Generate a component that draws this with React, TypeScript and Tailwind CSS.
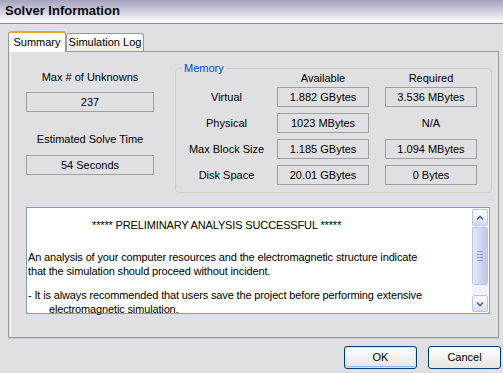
import React from "react";

const Field = ({ w, children }: { w: string; children: React.ReactNode }) => (
  <div className={`${w} h-[20px] border border-[#a0a0a0] flex items-center justify-center text-black`}>{children}</div>
);

export default function App() {
  const rows = [
    ["Virtual", "1.882 GBytes", "3.536 MBytes"],
    ["Physical", "1023 MBytes", "N/A"],
    ["Max Block Size", "1.185 GBytes", "1.094 MBytes"],
    ["Disk Space", "20.01 GBytes", "0 Bytes"],
  ];
  return (
    <div
      className="w-[503px] h-[373px] bg-[#e0dfe3] overflow-hidden flex flex-col text-[11px] text-black"
      style={{ fontFamily: '"Liberation Sans", Arial, sans-serif' }}
    >
      {/* title bar */}
      <div className="h-[22px] bg-gradient-to-b from-[#a4a2bf] via-[#cfcee0] to-[#fbfbfd] flex items-center pl-[5px] font-bold text-[13px] text-[#0a0a0a]">
        Solver Information
      </div>
      <div className="h-[1px] bg-[#f2f2f6]" />
      <div className="h-[1px] bg-[#8a8aa2]" />

      {/* tabs */}
      <div className="mt-[7px] ml-[8px] flex items-end h-[20px]">
        <div className="relative z-10 h-[21px] w-[58px] bg-[#fcfcfe] border-x border-[#919b9c] rounded-t-[3px] border-t-[2px] border-t-[#f2a22a] flex items-center justify-center whitespace-nowrap -mb-[1px]">
          Summary
        </div>
        <div className="h-[18px] w-[78px] bg-gradient-to-b from-[#ffffff] to-[#ecebe6] border border-b-0 border-[#919b9c] rounded-t-[3px] flex items-center justify-center whitespace-nowrap">
          Simulation Log
        </div>
      </div>

      {/* panel */}
      <div className="ml-[8px] w-[491px] h-[287px] border border-[#919b9c] bg-[#e0dfe3] shadow-[inset_1px_0_0_#e0dfe3,inset_2px_0_0_#ffffff] flex flex-col">
        <div className="flex">
          {/* left column */}
          <div className="ml-[17px] pt-[14px] w-[128px] flex flex-col items-center">
            <div className="h-[22px] flex items-center whitespace-nowrap">Max # of Unknowns</div>
            <div className="mt-[4px]" />
            <Field w="w-[128px]">237</Field>
            <div className="h-[22px] mt-[16px] flex items-center whitespace-nowrap">Estimated Solve Time</div>
            <div className="mt-[5px]" />
            <Field w="w-[128px]">54 Seconds</Field>
          </div>

          {/* memory group */}
          <div className="ml-[21px] mt-[16px] w-[317px] h-[125px] border border-[#d0d0bf] rounded-[4px] relative">
            <div className="absolute -top-[8px] left-[6px] px-[2px] bg-[#e0dfe3] text-[#0046d5] leading-[14px]">Memory</div>
            <div className="flex h-[18px] items-center">
              <div className="w-[101px]" />
              <div className="w-[92px] text-center">Available</div>
              <div className="w-[16px]" />
              <div className="w-[92px] text-center">Required</div>
            </div>
            <div className="flex flex-col gap-[6px]">
              {rows.map((r) => (
                <div key={r[0]} className="flex items-center h-[20px]">
                  <div className="w-[101px] text-center whitespace-nowrap">{r[0]}</div>
                  <Field w="w-[92px]">{r[1]}</Field>
                  <div className="w-[16px]" />
                  {r[2] === "N/A" ? (
                    <div className="w-[92px] text-center">N/A</div>
                  ) : (
                    <Field w="w-[92px]">{r[2]}</Field>
                  )}
                </div>
              ))}
            </div>
          </div>
        </div>

        {/* text area */}
        <div className="ml-[17px] mt-[14px] w-[464px] h-[107px] border border-[#7f9db9] bg-white flex">
          <div className="flex-1 pl-[1px] pt-[10px] leading-[14px] tracking-[-0.14px] whitespace-nowrap">
            <div className="pl-[64px]">***** PRELIMINARY ANALYSIS SUCCESSFUL *****</div>
            <div className="h-[18px]" />
            <div>An analysis of your computer resources and the electromagnetic structure indicate</div>
            <div>that the simulation should proceed without incident.</div>
            <div className="h-[10px]" />
            <div>- It is always recommended that users save the project before performing extensive</div>
            <div className="pl-[21px]">electromagnetic simulation.</div>
          </div>
          <div className="w-[17px] bg-[#fcfcfc] flex flex-col py-[1px] pr-[1px]">
            <div className="h-[17px] w-[16px] rounded-[2px] border border-[#b5c6ea] bg-gradient-to-b from-[#ffffff] to-[#d5dbf2] flex items-center justify-center">
              <svg width="8" height="6" viewBox="0 0 8 6"><path d="M1 4.5 L4 1.5 L7 4.5" stroke="#4d6185" strokeWidth="1.6" fill="none" /></svg>
            </div>
            <div className="h-[58px] w-[16px] mt-[1px] rounded-[2px] border border-[#b5c6ea] bg-gradient-to-r from-[#e6ebfb] via-[#d0d7f0] to-[#bec8ea] flex flex-col items-center justify-center gap-[2px]">
              <div className="w-[6px] h-[1px] bg-[#8c9ac8]" />
              <div className="w-[6px] h-[1px] bg-[#8c9ac8]" />
              <div className="w-[6px] h-[1px] bg-[#8c9ac8]" />
              <div className="w-[6px] h-[1px] bg-[#8c9ac8]" />
            </div>
            <div className="flex-1 bg-[#f3f3f9]" />
            <div className="h-[17px] w-[16px] rounded-[2px] border border-[#b5c6ea] bg-gradient-to-b from-[#ffffff] to-[#d5dbf2] flex items-center justify-center">
              <svg width="8" height="6" viewBox="0 0 8 6"><path d="M1 1.5 L4 4.5 L7 1.5" stroke="#4d6185" strokeWidth="1.6" fill="none" /></svg>
            </div>
          </div>
        </div>
      </div>
      <div className="ml-[8px] w-[493px] h-[1px] bg-[#d0d0bf]" />

      {/* buttons */}
      <div className="flex justify-end gap-[11px] pr-[2px] mt-[7px]">
        <button className="w-[73px] h-[23px] rounded-[3px] border border-[#003c74] bg-gradient-to-b from-[#ffffff] to-[#e6e5de] shadow-[inset_0_0_0_1px_#cee7ff,inset_0_-1px_0_1px_#98b8ea] flex items-center justify-center">
          OK
        </button>
        <button className="w-[73px] h-[23px] rounded-[3px] border border-[#003c74] bg-gradient-to-b from-[#ffffff] to-[#e6e5de] flex items-center justify-center">
          Cancel
        </button>
      </div>
    </div>
  );
}
